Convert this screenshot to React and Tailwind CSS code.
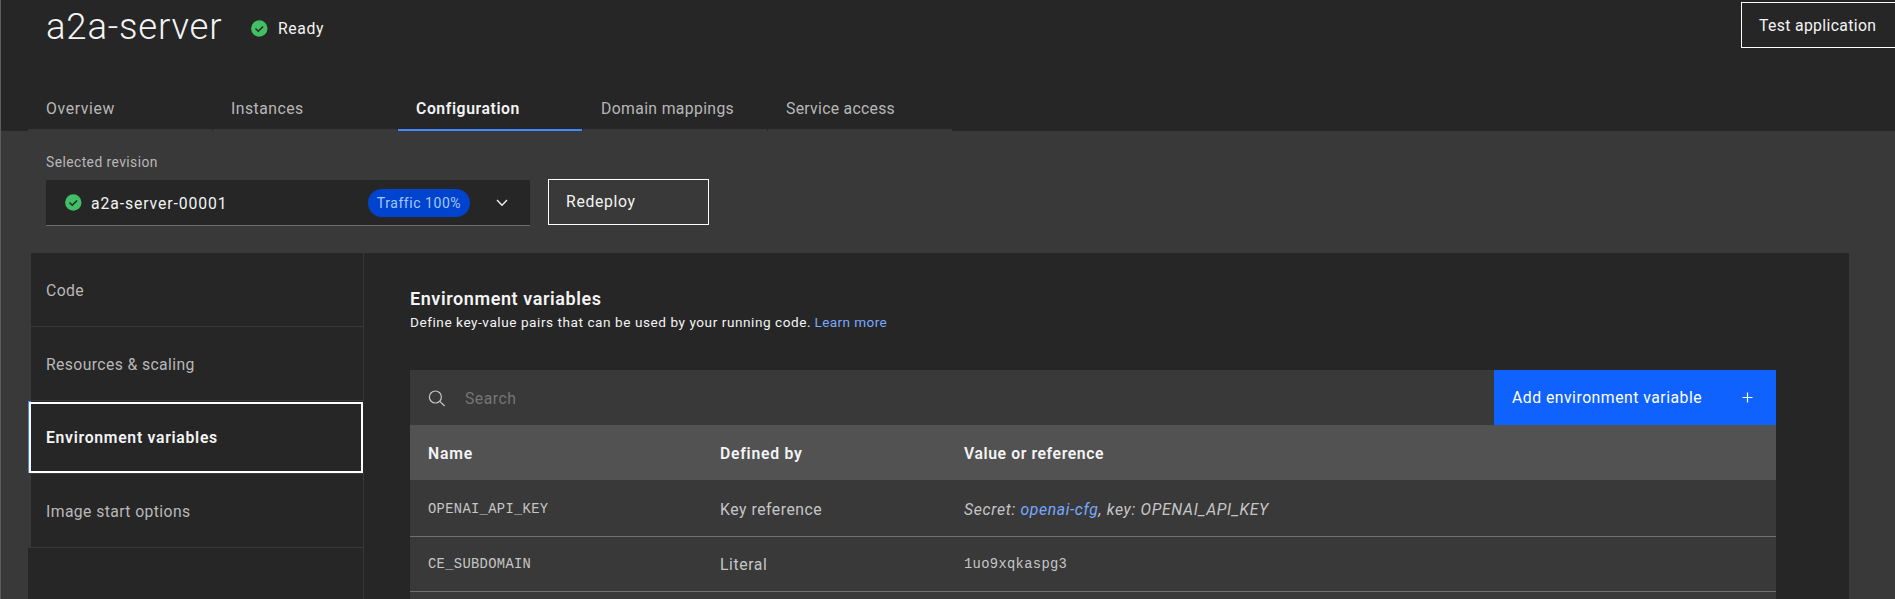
import clsx from "clsx";

function CheckIcon() {
  return (
    <svg viewBox="0 0 17 17" className="h-[17px] w-[17px] shrink-0">
      <circle cx="8.3" cy="8.5" r="8.2" fill="#42be65" />
      <path d="M4.5 8.6 7.2 11.2 12.1 6.4" fill="none" stroke="#262626" strokeWidth="1.4" />
    </svg>
  );
}

const TABS = [
  { label: "Overview", tracking: "tracking-[0.65px]" },
  { label: "Instances", tracking: "tracking-[0.5px]" },
  { label: "Configuration", tracking: "tracking-[0.58px]", active: true },
  { label: "Domain mappings", tracking: "tracking-[0.36px]" },
  { label: "Service access", tracking: "tracking-[0.3px]" },
];

const NAV = [
  { label: "Code", tracking: "tracking-[0.4px]", height: "h-[74px]" },
  { label: "Resources & scaling", tracking: "tracking-[0.38px]", height: "h-[74px]" },
  { label: "Environment variables", tracking: "tracking-[0.71px]", height: "h-[73px]", active: true },
  { label: "Image start options", tracking: "tracking-[0.4px]", height: "h-[74px]" },
];

function Tab({ label, tracking, active }) {
  return (
    <div
      className={clsx(
        "mr-px flex h-[47px] w-[184px] items-center border-b-2 pl-[18px] pt-[4px] text-[15.75px] leading-5",
        tracking,
        active ? "border-[#4589ff] font-semibold text-[#f4f4f4]" : "border-[#393939] text-[#b8b8b8]"
      )}
    >
      {label}
    </div>
  );
}

function NavItem({ label, tracking, height, active }) {
  if (active) {
    return (
      <div className={clsx("flex flex-col border-b border-[#393939] pr-px", height)}>
        <div className="h-px w-[3px] bg-[#4589ff]" />
        <div className="flex flex-1 border-l border-[#4589ff]">
          <div
            className={clsx(
              "flex flex-1 items-center border-2 border-white pl-[15px] text-[15.75px] font-semibold leading-5 text-[#f4f4f4]",
              tracking
            )}
          >
            {label}
          </div>
        </div>
      </div>
    );
  }
  return (
    <div
      className={clsx(
        "flex items-center border-b border-l-[3px] border-r border-[#393939] pl-[15px] pt-[2px] text-[15.75px] leading-5 text-[#b8b8b8]",
        height,
        tracking
      )}
    >
      {label}
    </div>
  );
}

export default function App() {
  return (
    <div className="flex h-[599px] w-full flex-col overflow-hidden border-l border-[#5e5e5e] bg-[#393939] font-['Roboto',sans-serif] text-[#f4f4f4]">
      <header className="flex h-[131px] shrink-0 flex-col justify-between bg-[#262626]">
        <div className="flex h-[56px] items-start">
          <h1 className="ml-[45px] mt-[5px] w-[205px] text-[36.5px] font-light leading-[44px] tracking-[0.8px]">a2a-server</h1>
          <div className="mt-[20px] flex items-start gap-[10px] text-[15.75px] leading-5 tracking-[0.6px]">
            <CheckIcon />
            <span className="-mt-px">Ready</span>
          </div>
          <button className="-mr-px ml-auto mt-[2px] flex h-[46px] w-[155px] items-start border border-white pl-[17px] pt-[13px] text-[15.75px] leading-5 tracking-[0.36px] whitespace-nowrap">
            Test application
          </button>
        </div>
        <nav className="ml-[27px] flex">
          {TABS.map((tab) => (
            <Tab key={tab.label} {...tab} />
          ))}
        </nav>
      </header>

      <section className="flex h-[122px] shrink-0 flex-col pl-[45px] pt-[21px]">
        <div className="h-[27px] text-[13.8px] leading-5 tracking-[0.45px] text-[#b8b8b8]">Selected revision</div>
        <div className="flex items-start">
          <div className="mt-px flex h-[46px] w-[484px] items-center border-b border-[#6f6f6f] bg-[#262626] pl-[19px] pr-[21px]">
            <CheckIcon />
            <span className="ml-[9px] pt-[2px] text-[15.75px] leading-5 tracking-[0.9px]">a2a-server-00001</span>
            <span className="ml-auto flex h-[28px] w-[102px] items-center justify-center rounded-full bg-[#0043ce] text-[14px] leading-5 tracking-[0.55px] text-[#a6c8ff]">
              Traffic 100%
            </span>
            <svg viewBox="0 0 14 10" className="ml-[25px] h-[10px] w-[14px]">
              <path d="M2 2 7 7.2 12 2" fill="none" stroke="#f4f4f4" strokeWidth="1.3" />
            </svg>
          </div>
          <button className="ml-[18px] flex h-[46px] w-[161px] items-start border border-white pl-[17px] pt-[12px] text-[15.75px] leading-5 tracking-[0.67px]">
            Redeploy
          </button>
        </div>
      </section>

      <main className="ml-[27px] mr-[46px] flex flex-1">
        <aside className="flex w-[336px] flex-col">
          <div className="flex flex-col bg-[#262626]">
            {NAV.map((item) => (
              <NavItem key={item.label} {...item} />
            ))}
          </div>
          <div className="flex-1 border-r border-[#393939] bg-[#262626]" />
        </aside>
        <div className="flex flex-1 flex-col bg-[#262626] pl-[46px] pr-[73px] pt-[35px]">
          <h2 className="h-[24px] text-[18px] font-semibold leading-[22px] tracking-[0.58px]">Environment variables</h2>
          <p className="h-[58px] text-[13.6px] leading-5">
            <span className="tracking-[0.55px]">Define key-value pairs that can be used by your running code.</span>{" "}
            <a className="tracking-[0.39px] text-[#78a9ff]">Learn more</a>
          </p>
          <div className="flex h-[55px] bg-[#393939]">
            <div className="flex flex-1 items-center pl-[18px] text-[15.75px] leading-5 tracking-[0.5px] text-[#757575]">
              <svg viewBox="0 0 18 18" className="mr-[19px] h-[18px] w-[18px]" fill="none" stroke="#c6c6c6" strokeWidth="1.2">
                <circle cx="7.4" cy="8" r="6" />
                <path d="M11.8 12.4 16.6 17" />
              </svg>
              <span className="pt-[2px]">Search</span>
            </div>
            <button className="flex w-[282px] items-center justify-between bg-[#0f62fe] pl-[18px] pr-[23px] text-[15.75px] leading-5 tracking-[0.5px] text-white">
              Add environment variable
              <svg viewBox="0 0 12 12" className="h-[12px] w-[12px]">
                <path d="M6.5 0.5V10.5M1.5 5.5H11.5" stroke="#fff" strokeWidth="1.2" />
              </svg>
            </button>
          </div>
          <div className="grid grid-cols-[292px_244px_1fr] bg-[#393939] text-[15.75px] leading-5 text-[#c6c6c6]">
            <div className="col-span-3 grid h-[55px] grid-cols-subgrid items-center bg-[#525252] pt-[2px] font-semibold text-[#f4f4f4]">
              <span className="pl-[18px] tracking-[0.85px]">Name</span>
              <span className="pl-[18px] tracking-[0.75px]">Defined by</span>
              <span className="pl-[18px] tracking-[0.59px]">Value or reference</span>
            </div>
            <div className="col-span-3 grid h-[57px] grid-cols-subgrid items-center border-b border-[#6f6f6f] pt-[4px]">
              <span className="pl-[18px] font-['Liberation_Mono',monospace] text-[13.8px] tracking-[0.32px]">OPENAI_API_KEY</span>
              <span className="pl-[18px] tracking-[0.53px]">Key reference</span>
              <span className="pl-[18px] italic tracking-[0.68px]">
                Secret: <a className="tracking-[0.62px] text-[#78a9ff]">openai-cfg</a>, key: OPENAI_API_KEY
              </span>
            </div>
            <div className="col-span-3 grid h-[55px] grid-cols-subgrid items-center border-b border-[#6f6f6f] pt-[2px]">
              <span className="pl-[18px] font-['Liberation_Mono',monospace] text-[13.8px] tracking-[0.32px]">CE_SUBDOMAIN</span>
              <span className="pl-[18px] tracking-[0.6px]">Literal</span>
              <span className="pl-[18px] font-['Liberation_Mono',monospace] text-[13.8px] tracking-[0.32px]">1uo9xqkaspg3</span>
            </div>
          </div>
          <div className="flex-1 bg-[#393939]" />
        </div>
      </main>
    </div>
  );
}
